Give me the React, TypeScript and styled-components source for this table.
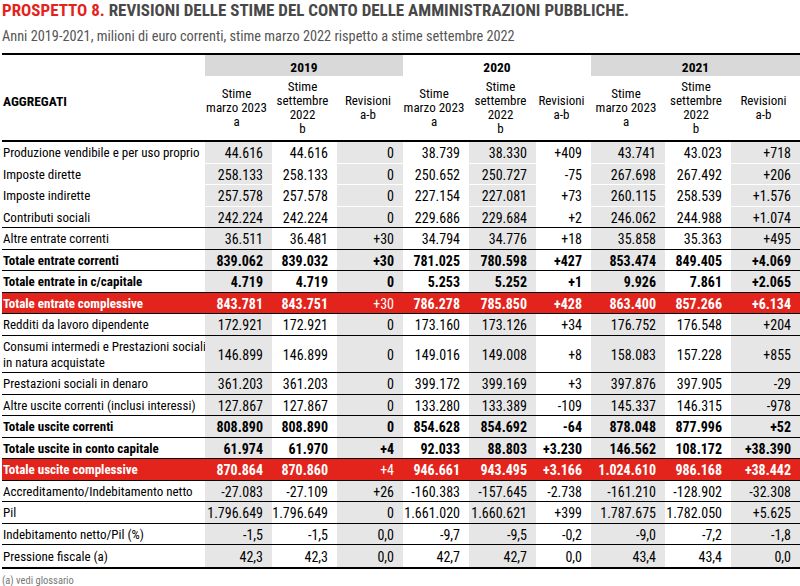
import React from "react";
import styled, { createGlobalStyle } from "styled-components";

const FONT = 'Roboto, "Liberation Sans", sans-serif';
const COLS = "203px 67px 65px 66px 66px 67px 55px 74px 66px 69px";
const RED = "#e3241c";
const SHADE = "#e6e6e6";
const YEAR_SHADE = "#d9d9d9";

const Global = createGlobalStyle`
  html, body { margin: 0; padding: 0; background: #fff; }
  body { font-family: ${FONT}; font-stretch: condensed; color: #000; }
  * { box-sizing: border-box; }
`;

const Page = styled.div`
  width: 800px;
  padding: 0 0 0 2px;
`;

const Title = styled.h1`
  margin: 0;
  font-size: 17px;
  line-height: 20px;
  font-weight: 700;
  color: #484848;
  white-space: nowrap;
`;

const TitleRed = styled.span`
  color: ${RED};
`;

const Subtitle = styled.p`
  margin: 8px 0 0 0;
  font-size: 14.3px;
  line-height: 16px;
  color: #555;
  white-space: nowrap;
`;

const Table = styled.div`
  margin-top: 9px;
  width: 798px;
  border-top: 2px solid #000;
  border-bottom: 2px solid #000;
`;

const Header = styled.div`
  display: grid;
  grid-template-columns: ${COLS};
  grid-template-rows: 21px 64px;
  border-bottom: 2px solid #000;
`;

const AggCell = styled.div`
  grid-row: 1 / span 2;
  grid-column: 1;
  display: flex;
  align-items: center;
  padding: 7px 0 0 1px;
  font-size: 13.5px;
  font-weight: 700;
`;

const YearCell = styled.div<{ $shaded: boolean }>`
  grid-row: 1;
  grid-column: span 3;
  display: flex;
  align-items: center;
  justify-content: center;
  padding-top: 2px;
  font-size: 13.5px;
  font-weight: 700;
  background: ${(p) => (p.$shaded ? YEAR_SHADE : "#fff")};
`;

const SubHeadCell = styled.div`
  grid-row: 2;
  display: flex;
  align-items: center;
  justify-content: center;
  padding-right: 4px;
  text-align: center;
  font-size: 13px;
  line-height: 14px;
`;

const Row = styled.div<{ $tall?: boolean; $red?: boolean; $bold?: boolean; $noLine?: boolean }>`
  display: grid;
  grid-template-columns: ${COLS};
  height: ${(p) => (p.$tall ? "37.5px" : "21.5px")};
  border-bottom: 1px solid ${(p) => (p.$noLine ? "transparent" : "#000")};
  font-size: 13px;
  line-height: 16px;
  font-weight: ${(p) => (p.$bold || p.$red ? 700 : 400)};
  color: ${(p) => (p.$red ? "#fff" : "#000")};
  background: ${(p) => (p.$red ? RED : "transparent")};
  &:last-child {
    border-bottom: none;
  }
`;

const LabelCell = styled.div`
  display: flex;
  align-items: center;
  padding: 2px 0 0 1px;
  white-space: nowrap;
`;

const NumCell = styled.div<{ $shaded: boolean; $light?: boolean }>`
  display: flex;
  align-items: center;
  justify-content: flex-end;
  padding: 2px 9px 0 0;
  font-size: 14px;
  white-space: nowrap;
  background: ${(p) => (p.$shaded ? SHADE : "transparent")};
  font-weight: ${(p) => (p.$light ? 400 : "inherit")};
`;

const Footnote = styled.div`
  margin-top: 5px;
  font-size: 10.5px;
  line-height: 14px;
  color: #777;
`;

type RowData = {
  label: React.ReactNode;
  v: string[];
  bold?: boolean;
  red?: boolean;
  tall?: boolean;
  noLine?: boolean;
};

const rows: RowData[] = [
  { label: "Produzione vendibile e per uso proprio", noLine: true, v: ["44.616", "44.616", "0", "38.739", "38.330", "+409", "43.741", "43.023", "+718"] },
  { label: "Imposte dirette", noLine: true, v: ["258.133", "258.133", "0", "250.652", "250.727", "-75", "267.698", "267.492", "+206"] },
  { label: "Imposte indirette", noLine: true, v: ["257.578", "257.578", "0", "227.154", "227.081", "+73", "260.115", "258.539", "+1.576"] },
  { label: "Contributi sociali", v: ["242.224", "242.224", "0", "229.686", "229.684", "+2", "246.062", "244.988", "+1.074"] },
  { label: "Altre entrate correnti", v: ["36.511", "36.481", "+30", "34.794", "34.776", "+18", "35.858", "35.363", "+495"] },
  { label: "Totale entrate correnti", bold: true, v: ["839.062", "839.032", "+30", "781.025", "780.598", "+427", "853.474", "849.405", "+4.069"] },
  { label: "Totale entrate in c/capitale", bold: true, v: ["4.719", "4.719", "0", "5.253", "5.252", "+1", "9.926", "7.861", "+2.065"] },
  { label: "Totale entrate complessive", red: true, v: ["843.781", "843.751", "+30", "786.278", "785.850", "+428", "863.400", "857.266", "+6.134"] },
  { label: "Redditi da lavoro dipendente", v: ["172.921", "172.921", "0", "173.160", "173.126", "+34", "176.752", "176.548", "+204"] },
  {
    label: (
      <>
        Consumi intermedi e Prestazioni sociali
        <br />
        in natura acquistate
      </>
    ),
    tall: true,
    v: ["146.899", "146.899", "0", "149.016", "149.008", "+8", "158.083", "157.228", "+855"],
  },
  { label: "Prestazioni sociali in denaro", v: ["361.203", "361.203", "0", "399.172", "399.169", "+3", "397.876", "397.905", "-29"] },
  { label: "Altre uscite correnti (inclusi interessi)", v: ["127.867", "127.867", "0", "133.280", "133.389", "-109", "145.337", "146.315", "-978"] },
  { label: "Totale uscite correnti", bold: true, v: ["808.890", "808.890", "0", "854.628", "854.692", "-64", "878.048", "877.996", "+52"] },
  { label: "Totale uscite in conto capitale", bold: true, v: ["61.974", "61.970", "+4", "92.033", "88.803", "+3.230", "146.562", "108.172", "+38.390"] },
  { label: "Totale uscite complessive", red: true, v: ["870.864", "870.860", "+4", "946.661", "943.495", "+3.166", "1.024.610", "986.168", "+38.442"] },
  { label: "Accreditamento/Indebitamento netto", v: ["-27.083", "-27.109", "+26", "-160.383", "-157.645", "-2.738", "-161.210", "-128.902", "-32.308"] },
  { label: "Pil", v: ["1.796.649", "1.796.649", "0", "1.661.020", "1.660.621", "+399", "1.787.675", "1.782.050", "+5.625"] },
  { label: "Indebitamento netto/Pil (%)", v: ["-1,5", "-1,5", "0,0", "-9,7", "-9,5", "-0,2", "-9,0", "-7,2", "-1,8"] },
  { label: "Pressione fiscale (a)", v: ["42,3", "42,3", "0,0", "42,7", "42,7", "0,0", "43,4", "43,4", "0,0"] },
];

const years = ["2019", "2020", "2021"];

const subHeads: React.ReactNode[] = [
  <>Stime<br />marzo 2023<br />a</>,
  <>Stime<br />settembre<br />2022<br />b</>,
  <>Revisioni<br />a-b</>,
];

export default function App() {
  return (
    <Page>
      <Global />
      <Title>
        <TitleRed>PROSPETTO 8.</TitleRed> REVISIONI DELLE STIME DEL CONTO DELLE AMMINISTRAZIONI PUBBLICHE.
      </Title>
      <Subtitle>
        Anni 2019-2021, milioni di euro correnti, stime marzo 2022 rispetto a stime settembre 2022
      </Subtitle>
      <Table>
        <Header>
          <AggCell>AGGREGATI</AggCell>
          {years.map((y, i) => (
            <YearCell key={y} $shaded={i !== 1}>
              {y}
            </YearCell>
          ))}
          {years.flatMap((y) =>
            subHeads.map((s, j) => <SubHeadCell key={y + j}>{s}</SubHeadCell>)
          )}
        </Header>
        {rows.map((r, i) => (
          <Row key={i} $tall={r.tall} $red={r.red} $bold={r.bold} $noLine={r.noLine}>
            <LabelCell>{r.label}</LabelCell>
            {r.v.map((val, j) => (
              <NumCell key={j} $shaded={!r.red && j % 2 === 0} $light={r.red && j === 2}>
                {val}
              </NumCell>
            ))}
          </Row>
        ))}
      </Table>
      <Footnote>(a) vedi glossario</Footnote>
    </Page>
  );
}
